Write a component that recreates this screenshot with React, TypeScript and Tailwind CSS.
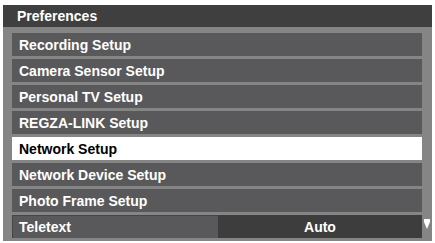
const items = [
  "Recording Setup",
  "Camera Sensor Setup",
  "Personal TV Setup",
  "REGZA-LINK Setup",
  "Network Setup",
  "Network Device Setup",
  "Photo Frame Setup",
];

const SELECTED = "Network Setup";

export default function App() {
  return (
    <div
      className="w-[435px] h-[243px] bg-white pt-[5px] pl-[3px] pr-[3px]"
      style={{ fontFamily: '"Liberation Sans", Arial, sans-serif' }}
    >
      <div className="h-[236px] bg-[#858586] flex flex-col">
        <div className="h-[22px] bg-[#3f3f3f] pl-[14px] flex items-center text-white font-bold text-[14px] leading-none">
          Preferences
        </div>
        <div className="flex flex-col gap-[3px] pt-[6px] pl-[9px]">
          {items.map((label) => {
            const selected = label === SELECTED;
            return (
              <div
                key={label}
                className={
                  selected
                    ? "w-[410px] h-[23px] bg-white text-black font-bold text-[14px] leading-none pl-[7px] flex items-center"
                    : "w-[410px] h-[23px] bg-[#59595b] text-white font-bold text-[14px] leading-none pl-[7px] flex items-center"
                }
              >
                {label}
              </div>
            );
          })}
          <div className="flex">
            <div className="w-[410px] h-[23px] flex text-white font-bold text-[14px] leading-none">
              <div className="w-[206px] bg-[#59595b] border-l border-t border-[#454547] pl-[6px] flex items-center">
                Teletext
              </div>
              <div className="flex-1 bg-[#3d3d3d] flex items-center justify-center">Auto</div>
            </div>
            <div className="w-[10px] flex justify-center pt-[4px]">
              <svg width="6" height="10" viewBox="0 0 6 10">
                <polygon points="0,0 6,0 6,3 3,10 0,3" fill="#ffffff" />
              </svg>
            </div>
          </div>
        </div>
      </div>
    </div>
  );
}
